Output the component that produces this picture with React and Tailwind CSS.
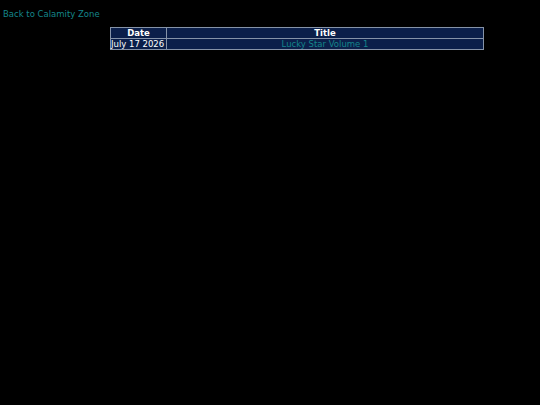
import React from "react";

export default function App() {
  return (
    <div className="min-h-screen w-[540px] h-[405px] bg-black text-[8.5px] font-['DejaVu_Sans',sans-serif] text-white">
      <div className="pt-[9px] pl-[3px] leading-[11px]">
        <a href="#" className="text-[#14858a]">Back to Calamity Zone</a>
      </div>
      <table className="ml-[110px] mt-[7px] w-[374px] border-collapse border border-[#8593a8] bg-[#0b1f4a] leading-[10px]">
        <thead>
          <tr>
            <th className="w-[56px] border border-[#8593a8] p-0 font-bold">Date</th>
            <th className="border border-[#8593a8] p-0 font-bold">Title</th>
          </tr>
        </thead>
        <tbody>
          <tr>
            <td className="border border-[#8593a8] p-0 text-left whitespace-nowrap">July 17 2026</td>
            <td className="border border-[#8593a8] p-0 text-center">
              <a href="#" className="text-[#14858a]">Lucky Star Volume 1</a>
            </td>
          </tr>
        </tbody>
      </table>
    </div>
  );
}
